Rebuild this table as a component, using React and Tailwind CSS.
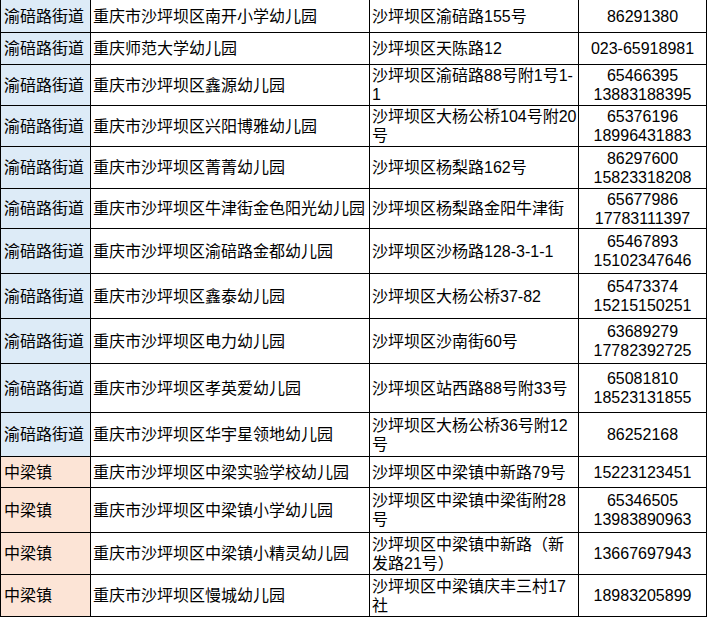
const rows = [
  { h: 'h-[33px]', area: '渝碚路街道', name: '重庆市沙坪坝区南开小学幼儿园', addr: ['沙坪坝区渝碚路155号'], tel: ['86291380'] },
  { h: 'h-[32px]', area: '渝碚路街道', name: '重庆师范大学幼儿园', addr: ['沙坪坝区天陈路12'], tel: ['023-65918981'] },
  { h: 'h-[41px]', area: '渝碚路街道', name: '重庆市沙坪坝区鑫源幼儿园', addr: ['沙坪坝区渝碚路88号附1号1-', '1'], tel: ['65466395', '13883188395'] },
  { h: 'h-[41px]', area: '渝碚路街道', name: '重庆市沙坪坝区兴阳博雅幼儿园', addr: ['沙坪坝区大杨公桥104号附20', '号'], tel: ['65376196', '18996431883'] },
  { h: 'h-[42px]', area: '渝碚路街道', name: '重庆市沙坪坝区菁菁幼儿园', addr: ['沙坪坝区杨梨路162号'], tel: ['86297600', '15823318208'] },
  { h: 'h-[40px]', area: '渝碚路街道', name: '重庆市沙坪坝区牛津街金色阳光幼儿园', addr: ['沙坪坝区杨梨路金阳牛津街'], tel: ['65677986', '17783111397'] },
  { h: 'h-[45px]', area: '渝碚路街道', name: '重庆市沙坪坝区渝碚路金都幼儿园', addr: ['沙坪坝区沙杨路128-3-1-1'], tel: ['65467893', '15102347646'] },
  { h: 'h-[45px]', area: '渝碚路街道', name: '重庆市沙坪坝区鑫泰幼儿园', addr: ['沙坪坝区大杨公桥37-82'], tel: ['65473374', '15215150251'] },
  { h: 'h-[45px]', area: '渝碚路街道', name: '重庆市沙坪坝区电力幼儿园', addr: ['沙坪坝区沙南街60号'], tel: ['63689279', '17782392725'] },
  { h: 'h-[49px]', area: '渝碚路街道', name: '重庆市沙坪坝区孝英爱幼儿园', addr: ['沙坪坝区站西路88号附33号'], tel: ['65081810', '18523131855'] },
  { h: 'h-[44px]', area: '渝碚路街道', name: '重庆市沙坪坝区华宇星领地幼儿园', addr: ['沙坪坝区大杨公桥36号附12', '号'], tel: ['86252168'] },
  { h: 'h-[31px]', area: '中梁镇', name: '重庆市沙坪坝区中梁实验学校幼儿园', addr: ['沙坪坝区中梁镇中新路79号'], tel: ['15223123451'] },
  { h: 'h-[45px]', area: '中梁镇', name: '重庆市沙坪坝区中梁镇小学幼儿园', addr: ['沙坪坝区中梁镇中梁街附28', '号'], tel: ['65346505', '13983890963'] },
  { h: 'h-[42px]', area: '中梁镇', name: '重庆市沙坪坝区中梁镇小精灵幼儿园', addr: ['沙坪坝区中梁镇中新路（新', '发路21号）'], tel: ['13667697943'] },
  { h: 'h-[42px]', area: '中梁镇', name: '重庆市沙坪坝区慢城幼儿园', addr: ['沙坪坝区中梁镇庆丰三村17', '社'], tel: ['18983205899'] },
];

// one cell line per entry, so wraps fall where the sheet has them
const Lines = ({ items }) => (
  <div className="flex flex-col">
    {items.map((t, i) => (
      <span key={i} className="whitespace-nowrap">{t}</span>
    ))}
  </div>
);

export default function App() {
  return (
    <div
      className="w-[707px] h-[617px] bg-white text-black text-[16px] leading-[19px] overflow-hidden"
      style={{ fontFamily: '"Liberation Sans", "Noto Sans CJK SC", sans-serif' }}
    >
      {rows.map((r, i) => (
        <div key={i} className={`flex ${r.h} border-b border-black`}>
          <div
            className={`w-[91px] shrink-0 flex items-center pl-[3px] border-l border-r border-black whitespace-nowrap ${
              r.area === '中梁镇' ? 'bg-[#fce4d6]' : 'bg-[#ddebf7]'
            }`}
          >
            {r.area}
          </div>
          <div className="w-[279px] shrink-0 flex items-center pl-[2px] border-r border-black whitespace-nowrap">
            {r.name}
          </div>
          <div className="w-[209px] shrink-0 flex items-center pl-[2px] border-r border-black">
            <Lines items={r.addr} />
          </div>
          <div className="w-[128px] shrink-0 flex items-center justify-center text-center border-r border-black">
            <Lines items={r.tel} />
          </div>
        </div>
      ))}
    </div>
  );
}
